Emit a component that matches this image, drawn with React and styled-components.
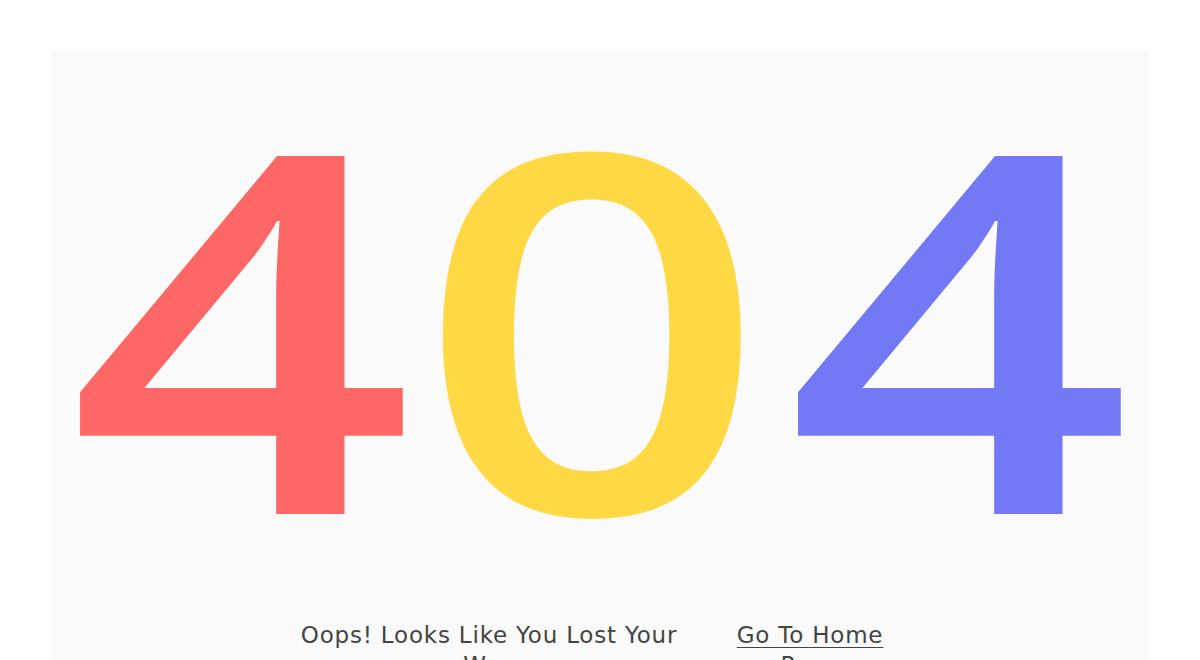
import React from "react";
import styled, { createGlobalStyle } from "styled-components";

const GlobalStyle = createGlobalStyle`
  body {
    margin: 0;
    background: #ffffff;
    font-family: "DejaVu Sans", "Open Sans", sans-serif;
  }
`;

const Page = styled.div`
  padding: 51px 51px 0;
`;

const Panel = styled.main`
  background-color: #fafafa;
  padding-top: 19px;
  padding-bottom: 60px;
  display: flex;
  flex-direction: column;
  align-items: center;
`;

const Digits = styled.h1`
  margin: 0;
  display: flex;
  justify-content: center;
  align-items: baseline;
  font-family: "Open Sans", sans-serif;
  font-weight: 600;
  font-size: 500px;
  line-height: 1;
  height: 500px;
`;

const Digit = styled.span`
  display: inline-block;
  color: ${(p) => p.color};
  margin-right: ${(p) => p.space || 0}px;
  transform: scaleX(${(p) => p.scale});
`;

const Footer = styled.div`
  margin-top: 50px;
  display: flex;
  justify-content: center;
  gap: 31px;
  padding-right: 11px;
  font-size: 23px;
  letter-spacing: 0.8px;
  line-height: 30px;
  color: #444444;
  text-align: center;
`;

const Message = styled.p`
  margin: 0;
  width: ${(p) => p.width}px;
`;

const HomeLink = styled.a`
  display: block;
  width: ${(p) => p.width}px;
  color: #444444;
  text-decoration: underline;
  text-underline-offset: 4px;
  text-decoration-thickness: 1px;
`;

export default function App() {
  return (
    <>
      <GlobalStyle />
      <Page>
        <Panel>
          <Digits>
            <Digit color="#ff6767" scale={1.207} space={64.5}>4</Digit>
            <Digit color="#ffd944" scale={1.229} space={81.5}>0</Digit>
            <Digit color="#7379f5" scale={1.207}>4</Digit>
          </Digits>
          <Footer>
            <Message width={400}>Oops! Looks Like You Lost Your Way</Message>
            <HomeLink width={180} href="#">
              Go To Home Page
            </HomeLink>
          </Footer>
        </Panel>
      </Page>
    </>
  );
}
